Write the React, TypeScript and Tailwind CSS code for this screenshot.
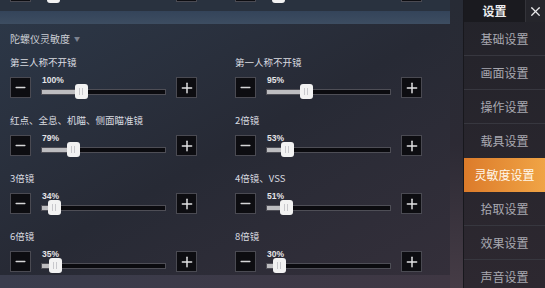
import { Minus, Plus, X } from 'lucide-react'

interface SliderRow {
  label: string
  value: number
  /** thumb centre, px from the track's left edge */
  pos: number
}

const rows: [SliderRow, SliderRow][] = [
  [
    { label: '第三人称不开镜', value: 100, pos: 40 },
    { label: '第一人称不开镜', value: 95, pos: 40 },
  ],
  [
    { label: '红点、全息、机瞄、侧面瞄准镜', value: 79, pos: 32 },
    { label: '2倍镜', value: 53, pos: 21 },
  ],
  [
    { label: '3倍镜', value: 34, pos: 13 },
    { label: '4倍镜、VSS', value: 51, pos: 20 },
  ],
  [
    { label: '6倍镜', value: 35, pos: 14 },
    { label: '8倍镜', value: 30, pos: 13 },
  ],
]

const menu = ['基础设置', '画面设置', '操作设置', '载具设置', '灵敏度设置', '拾取设置', '效果设置', '声音设置']

const cjk = "font-['Noto_Sans_CJK_SC',sans-serif]"

function StepButton({ kind }: { kind: 'minus' | 'plus' }) {
  return (
    <div className="w-[21px] h-[21px] bg-[#0d0d11] border border-[#4a4a52] flex items-center justify-center shrink-0">
      {kind === 'minus' ? (
        <Minus className="w-[15px] h-[15px] text-[#d6d6d8]" strokeWidth={2.2} />
      ) : (
        <Plus className="w-[16px] h-[16px] text-[#e2e2e4]" strokeWidth={2.2} />
      )}
    </div>
  )
}

function Controls({ value, pos, showValue = true }: { value: number; pos: number; showValue?: boolean }) {
  return (
    <div className="flex items-start h-[21px]">
      <StepButton kind="minus" />
      <div className="relative w-[125px] h-[21px] ml-[10px] mr-[10px]">
        {showValue && (
          <span className="absolute left-[1px] top-[-3px] text-[8.5px] leading-[12px] font-bold text-[#e4e4e6] font-['Liberation_Sans',sans-serif]">
            {value}%
          </span>
        )}
        <div className="absolute left-0 right-0 top-[12px] h-[6px] bg-[#0b0b0f] border border-[#4e4e56] overflow-hidden">
          <div className="h-full bg-[#bdbdc0]" style={{ width: pos }} />
        </div>
        <div
          className="absolute top-[7px] w-[13px] h-[15px] rounded-[3px] bg-[#f2f2f2] flex items-center justify-center gap-[2px]"
          style={{ left: pos - 6.5 }}
        >
          <span className="w-px h-[7px] bg-[#c8c8cc]" />
          <span className="w-px h-[7px] bg-[#c8c8cc]" />
        </div>
      </div>
      <StepButton kind="plus" />
    </div>
  )
}

export default function App() {
  return (
    <div className={`w-[545px] h-[288px] flex overflow-hidden bg-[#262a34] ${cjk}`}>
      {/* main settings column */}
      <div className="w-[450px] flex flex-col shrink-0">
        {/* tail of previous section */}
        <div className="h-[11px] overflow-hidden bg-[#29323f]">
          <div className="grid grid-cols-[225px_225px] pl-[10px] -mt-[19px]">
            <Controls value={100} pos={12} showValue={false} />
            <Controls value={100} pos={12} showValue={false} />
          </div>
        </div>
        <div className="h-[13px] bg-gradient-to-b from-[#34445a] to-[#3d4d61]" />

        {/* gyroscope panel */}
        <div className="h-[251px] bg-gradient-to-br from-[#2c3747] via-[#272a35] to-[#342f3a] pl-[10px] pt-[8px]">
          <div className="flex items-center h-[12px] text-[10px] text-[#cdd0d6]">
            陀螺仪灵敏度
            <span className="ml-[4px] text-[6px] text-[#7d8390]">▼</span>
          </div>
          <div className="mt-[12px] flex flex-col gap-[16px]">
            {rows.map((pair, i) => (
              <div key={i} className="grid grid-cols-[225px_225px]">
                {pair.map((r) => (
                  <div key={r.label} className="flex flex-col">
                    <div className="h-[12px] leading-[12px] text-[9.5px] text-[#dadce0] whitespace-nowrap">
                      {r.label}
                    </div>
                    <div className="mt-[9px]">
                      <Controls value={r.value} pos={r.pos} />
                    </div>
                  </div>
                ))}
              </div>
            ))}
          </div>
        </div>
        <div className="flex-1 bg-gradient-to-r from-[#3a3d4d] to-[#3f3743]" />
      </div>

      {/* gap column */}
      <div className="w-[13px] shrink-0 bg-gradient-to-b from-[#272b35] via-[#2c2a34] to-[#463c46]" />

      {/* side menu */}
      <div className="flex-1 flex flex-col bg-gradient-to-b from-[#23232a] to-[#2d2830] border-l border-[#18181d]">
        <div className="h-[22px] flex shrink-0">
          <div className="flex-1 bg-[#1a1a1f] flex items-center justify-center text-[12px] font-bold text-[#ececee]">
            设置
          </div>
          <div className="w-[20px] bg-[#25252b] border-l border-[#34343a] flex items-center justify-center">
            <X className="w-[15px] h-[15px] text-[#e8e8ea]" strokeWidth={2} />
          </div>
        </div>
        {menu.map((m, i) => {
          const active = m === '灵敏度设置'
          return (
            <div
              key={m}
              className={
                active
                  ? 'h-[34px] shrink-0 flex items-center justify-center text-[12px] text-[#fff8ec] bg-gradient-to-r from-[#dc7b2a] to-[#f0a445]'
                  : `h-[34px] shrink-0 flex items-center justify-center text-[12px] text-[#a8a8b0] ${
                      i < menu.length - 1 && menu[i + 1] !== '灵敏度设置' ? 'border-b border-[#37373f]' : ''
                    }`
              }
            >
              {m}
            </div>
          )
        })}
      </div>
    </div>
  )
}
